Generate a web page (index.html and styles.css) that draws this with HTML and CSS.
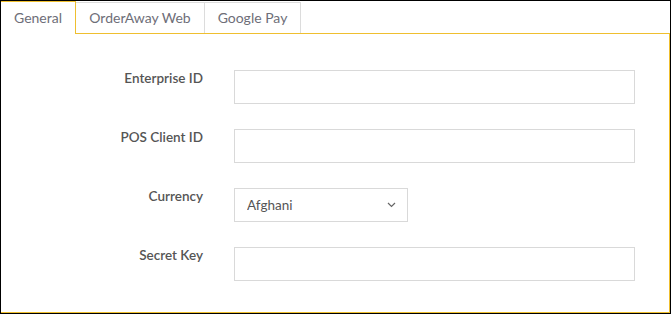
FILE: index.html
```html
<!DOCTYPE html>
<html>
<head>
<meta charset="utf-8">
<link rel="stylesheet" href="styles.css">
</head>
<body>
<div class="frame">
  <div class="tabs">
    <div class="tab active">General</div>
    <div class="tab tab-order">OrderAway Web</div>
    <div class="tab tab-gpay">Google Pay</div>
  </div>
  <div class="panel">
    <form class="form">
      <label class="label">Enterprise ID</label>
      <input class="field" type="text">
      <label class="label">POS Client ID</label>
      <input class="field" type="text">
      <label class="label">Currency</label>
      <div class="select-wrap">
        <select class="select"><option>Afghani</option></select>
        <svg class="chev" width="9" height="6" viewBox="0 0 9 6"><path d="M1 1 L4.5 4.5 L8 1" fill="none" stroke="#666" stroke-width="1.2"/></svg>
      </div>
      <label class="label">Secret Key</label>
      <input class="field" type="text">
    </form>
  </div>
</div>
</body>
</html>
```
FILE: styles.css
```css
html, body {
  margin: 0;
  padding: 0;
  background: #fff;
}
.frame {
  box-sizing: border-box;
  width: 671px;
  height: 314px;
  border: 1px solid #000;
  font-family: "Lato", "Liberation Sans", sans-serif;
  display: flex;
  flex-direction: column;
}
.tabs {
  display: flex;
  align-items: flex-end;
  height: 32px;
  position: relative;
  z-index: 1;
}
.tab {
  box-sizing: border-box;
  height: 31px;
  font-size: 14px;
  color: #6e6e78;
  display: flex;
  align-items: center;
  justify-content: center;
  border-top: 1px solid #dcdcdc;
  border-right: 1px solid #dcdcdc;
  background: #fff;
  padding-bottom: 1px;
}
.tab.active {
  height: 33px;
  width: 75px;
  margin-bottom: -1px;
  border-top: 1px solid #efbf2f;
  border-right: 1px solid #efbf2f;
  padding-bottom: 2px;
}
.tab-order { width: 129px; }
.tab-gpay { width: 96px; }
.panel {
  flex: 1;
  border-top: 1px solid #efbf2f;
  border-right: 1px solid #efbf2f;
  border-bottom: 1px solid #efbf2f;
  padding-top: 36px;
}
.form {
  display: grid;
  grid-template-columns: 202px 401px;
  column-gap: 31px;
  row-gap: 25px;
  margin: 0;
}
.label {
  font-size: 13.5px;
  font-weight: 600;
  color: #555;
  text-align: right;
  line-height: 16px;
  padding-top: 0;
}
.field {
  box-sizing: border-box;
  height: 34px;
  width: 401px;
  border: 1px solid #d9d9d9;
  margin: 0;
  padding: 0 12px;
  outline: none;
}
.select-wrap {
  position: relative;
  width: 174px;
  height: 34px;
}
.select {
  appearance: none;
  -webkit-appearance: none;
  box-sizing: border-box;
  width: 174px;
  height: 34px;
  border: 1px solid #d9d9d9;
  border-radius: 0;
  background: #fff;
  margin: 0;
  padding: 0 12px;
  font-family: "Lato", "Liberation Sans", sans-serif;
  font-size: 13.5px;
  color: #555;
}
.chev {
  position: absolute;
  right: 12px;
  top: 14px;
}
```
